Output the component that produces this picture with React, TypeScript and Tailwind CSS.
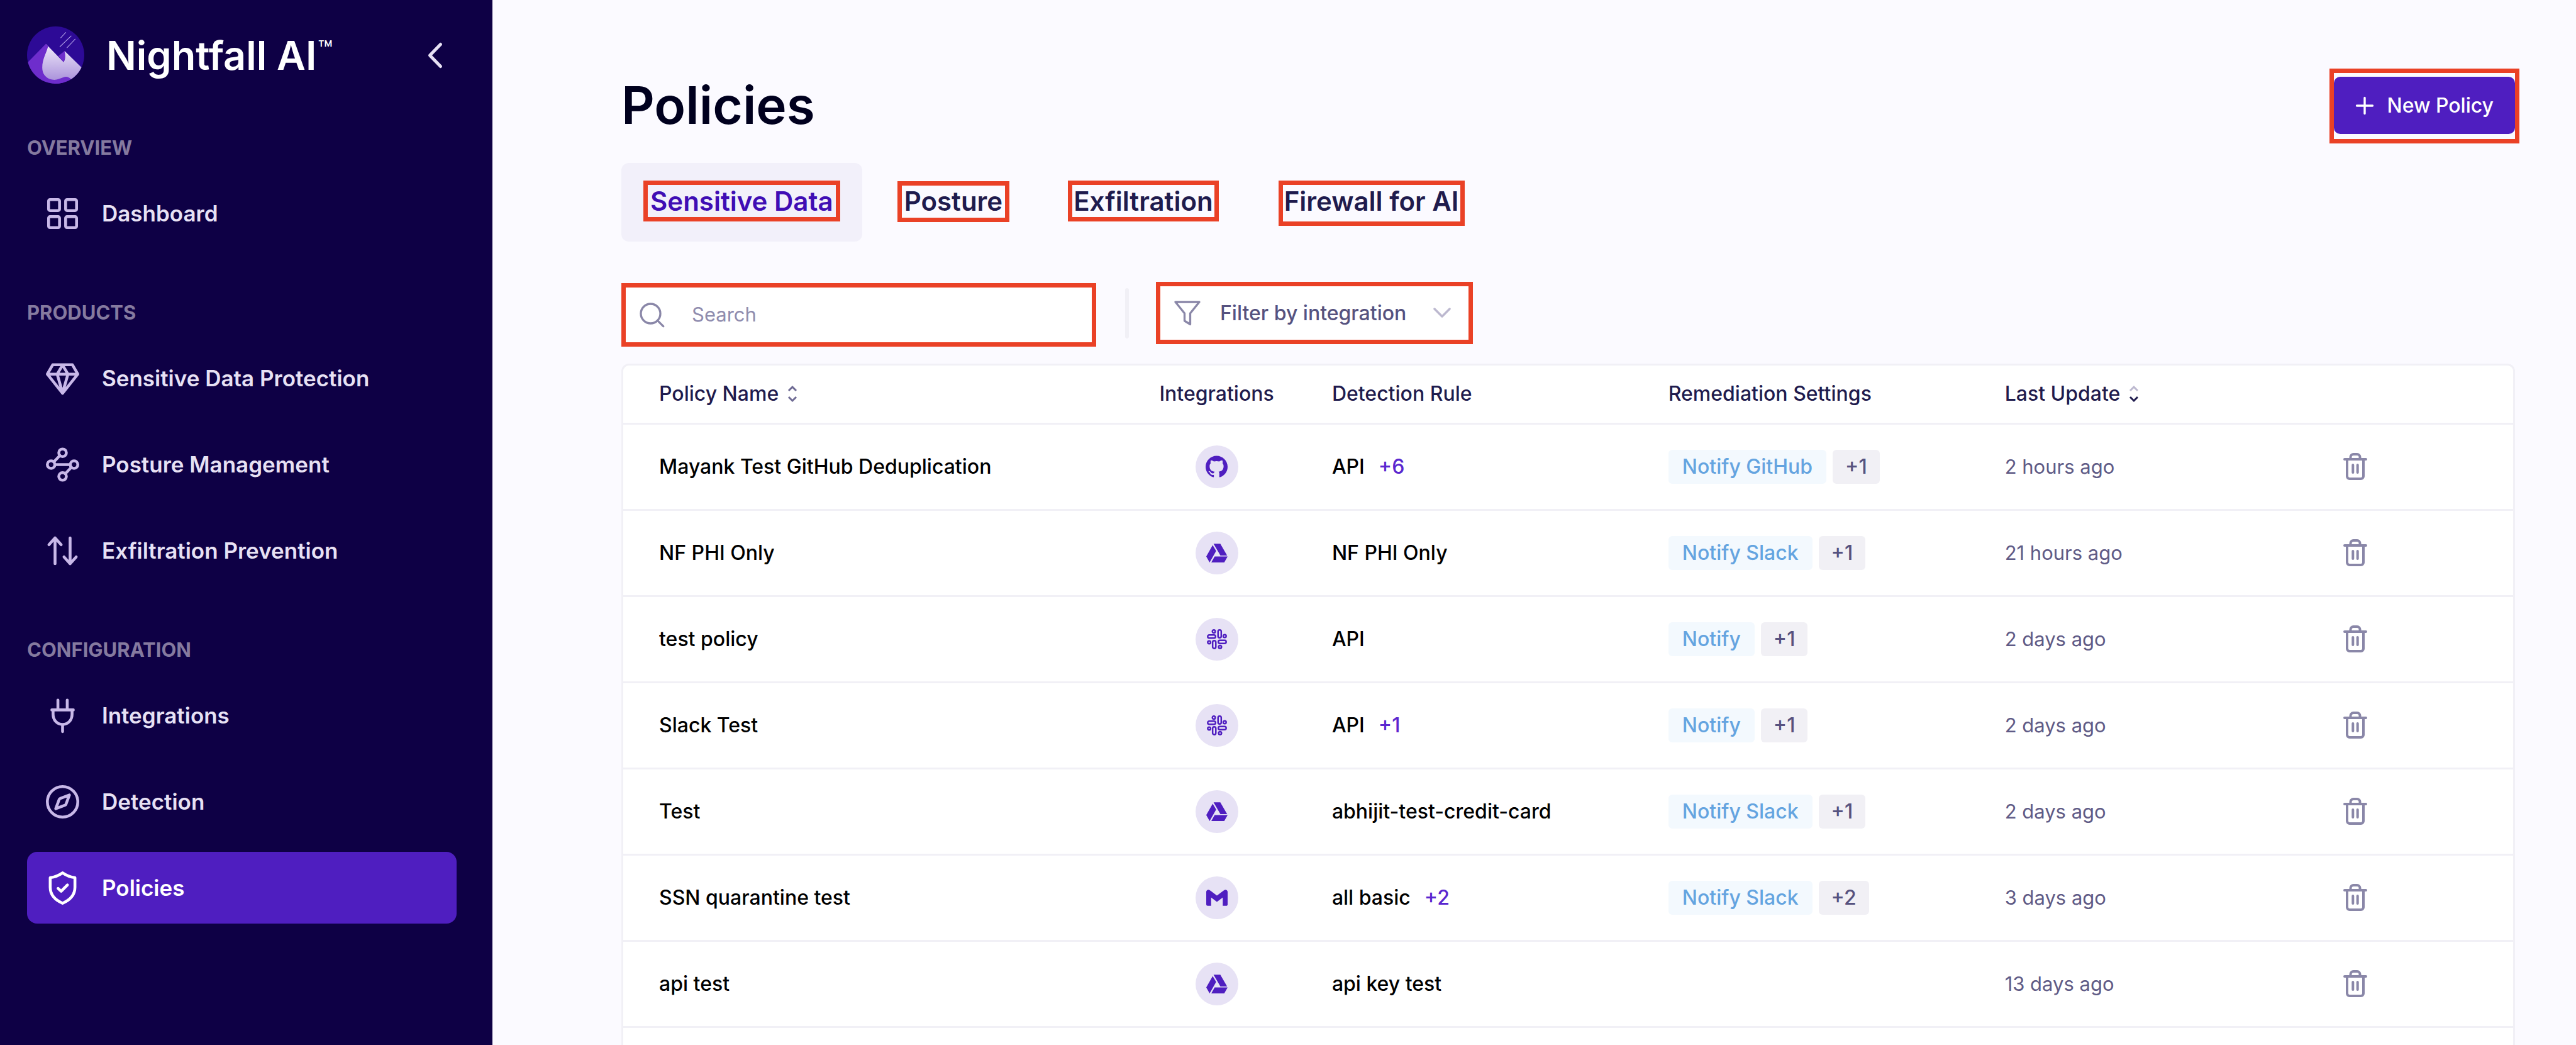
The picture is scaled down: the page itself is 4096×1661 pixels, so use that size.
import type { ReactNode } from "react";
import { FaGoogleDrive } from "react-icons/fa";
import { SiGithub, SiGmail } from "react-icons/si";

type IntegrationName = "github" | "drive" | "slack" | "gmail";

type Policy = {
  name: string;
  integration: IntegrationName;
  rule: string;
  moreRules?: string;
  action?: string;
  moreActions?: string;
  updated: string;
};

const policies: Policy[] = [
  { name: "Mayank Test GitHub Deduplication", integration: "github", rule: "API", moreRules: "+6", action: "Notify GitHub", moreActions: "+1", updated: "2 hours ago" },
  { name: "NF PHI Only", integration: "drive", rule: "NF PHI Only", action: "Notify Slack", moreActions: "+1", updated: "21 hours ago" },
  { name: "test policy", integration: "slack", rule: "API", action: "Notify", moreActions: "+1", updated: "2 days ago" },
  { name: "Slack Test", integration: "slack", rule: "API", moreRules: "+1", action: "Notify", moreActions: "+1", updated: "2 days ago" },
  { name: "Test", integration: "drive", rule: "abhijit-test-credit-card", action: "Notify Slack", moreActions: "+1", updated: "2 days ago" },
  { name: "SSN quarantine test", integration: "gmail", rule: "all basic", moreRules: "+2", action: "Notify Slack", moreActions: "+2", updated: "3 days ago" },
  { name: "api test", integration: "drive", rule: "api key test", updated: "13 days ago" },
];

function NavIcon({ children }: { children: ReactNode }) {
  return (
    <svg viewBox="0 0 20 20" className="size-[57px] shrink-0" fill="none" stroke="currentColor" strokeWidth="1.6" strokeLinecap="round" strokeLinejoin="round" aria-hidden="true">
      {children}
    </svg>
  );
}

const DashboardIcon = () => (
  <NavIcon>
    <rect x="2.2" y="2.2" width="6.1" height="6.1" rx="0.8" />
    <rect x="11.7" y="2.2" width="6.1" height="6.1" rx="0.8" />
    <rect x="2.2" y="11.7" width="6.1" height="6.1" rx="0.8" />
    <rect x="11.7" y="11.7" width="6.1" height="6.1" rx="0.8" />
  </NavIcon>
);

const DiamondIcon = () => (
  <NavIcon>
    <path d="M4.5 2.4h11l3 5.2L10 18.3 1.5 7.6l3-5.2ZM1.5 7.6h17M10 2.6 7 7.6l3 10.5 3-10.5-3-5" />
  </NavIcon>
);

const PostureIcon = () => (
  <NavIcon>
    <circle cx="10" cy="3.4" r="2.1" />
    <circle cx="3.6" cy="10" r="2.1" />
    <circle cx="16.4" cy="10" r="2.1" />
    <circle cx="10" cy="16.6" r="2.1" />
    <path d="M5.1 8.5 8.5 4.9M5.7 10h8.6M14.9 11.5l-3.4 3.6" />
  </NavIcon>
);

const ArrowsIcon = () => (
  <NavIcon>
    <path d="M5.8 17.2V2.8M2.4 6.6l3.4-3.8 3.4 3.8M14.2 2.8v14.4M10.8 13.4l3.4 3.8 3.4-3.8" />
  </NavIcon>
);

const PlugIcon = () => (
  <NavIcon>
    <path d="M7.4 1.3v4.8M12.6 1.3v4.8M4 6.8h12M4.7 7v2.2c0 3.2 2.2 5.7 5.3 5.7s5.3-2.5 5.3-5.7V7M10 15v3.9" />
  </NavIcon>
);

const CompassIcon = () => (
  <NavIcon>
    <circle cx="10" cy="10" r="8.5" />
    <path d="M13.8 6.2 11.9 11.3a1 1 0 0 1-.6.6L6.2 13.8 8.1 8.7a1 1 0 0 1 .6-.6l5.1-1.9Z" />
  </NavIcon>
);

const ShieldIcon = () => (
  <NavIcon>
    <path d="M10 1.5c2 1.4 4.3 2.4 6.9 2.7v5.4c0 3.8-2.5 7-6.9 8.9-4.4-1.9-6.9-5.1-6.9-8.9V4.2c2.6-.3 4.9-1.3 6.9-2.7Z" />
    <path d="m7.5 10.2 1.7 1.6 3.5-3.5" />
  </NavIcon>
);

const navSections = [
  { title: "OVERVIEW", items: [{ label: "Dashboard", Icon: DashboardIcon }] },
  {
    title: "PRODUCTS",
    items: [
      { label: "Sensitive Data Protection", Icon: DiamondIcon },
      { label: "Posture Management", Icon: PostureIcon },
      { label: "Exfiltration Prevention", Icon: ArrowsIcon },
    ],
  },
  {
    title: "CONFIGURATION",
    items: [
      { label: "Integrations", Icon: PlugIcon },
      { label: "Detection", Icon: CompassIcon },
      { label: "Policies", Icon: ShieldIcon, active: true },
    ],
  },
];

const tabs = [
  { label: "Sensitive Data", active: true, frame: "-inset-y-[7px] -inset-x-[11px]" },
  { label: "Posture", frame: "-top-[6px] -bottom-2 -inset-x-[11px]" },
  { label: "Exfiltration", frame: "-inset-y-[7px] -inset-x-[9px]" },
  { label: "Firewall for AI", frame: "-top-[7px] -bottom-[14px] -inset-x-[9px]" },
];

function Logo() {
  return (
    <svg viewBox="0 0 128 128" className="size-[91px]" aria-hidden="true">
      <defs>
        <linearGradient id="snow" x1="0" y1="39" x2="0" y2="120" gradientUnits="userSpaceOnUse">
          <stop offset="0" stopColor="#f1ecfb" />
          <stop offset="1" stopColor="#ab93db" />
        </linearGradient>
        <clipPath id="disc">
          <circle cx="64" cy="64" r="64" />
        </clipPath>
      </defs>
      <g clipPath="url(#disc)">
        <rect width="128" height="128" fill="#2d0a96" />
        <path d="M0 82 42 39l40 41v48H0Z" fill="#6e2dcc" />
        <path d="M70 66 84 55l4 8-6 17Z" fill="#6e2dcc" />
        <path d="M60 100h68v28H60Z" fill="#6e2dcc" />
        <path d="m42 39 40 41c3-5 5-12 2-25l40 39v14l-25 11c-5-6-11-8-18-5-8 3-16 7-25 5-14-3-22-13-22-27 0-18 9-33 12-44 2-4 0-6-4-9Z" fill="url(#snow)" />
        <g stroke="#b7a6ea" strokeWidth="1.5">
          <path d="M87 13 75 26M99 21 73 46M108 28 89 48" />
        </g>
      </g>
    </svg>
  );
}

function Sidebar() {
  return (
    <aside className="flex w-[783px] shrink-0 flex-col bg-[#0e0045] pt-[42px] pr-[57px] pl-[43px]">
      <div className="flex h-[91px] items-center">
        <Logo />
        <div className="ml-[35px] flex items-start text-white">
          <span className="text-[63px] leading-[74px] font-semibold">Nightfall AI</span>
          <span className="ml-0.5 text-[39px] leading-[56px]">™</span>
        </div>
        <button type="button" aria-label="Collapse sidebar" className="mr-[21px] ml-auto text-[#e7e1f4]">
          <svg viewBox="0 0 26 44" className="h-[44px] w-[26px]" fill="none" stroke="currentColor" strokeWidth="5" strokeLinecap="round" strokeLinejoin="round">
            <path d="M21.5 4.5 4.5 22l17 17.5" />
          </svg>
        </button>
      </div>
      <nav className="mt-[82px] flex flex-col gap-[81px]">
        {navSections.map((section) => (
          <section key={section.title}>
            <h2 className="text-[31px] leading-10 font-bold text-[#857a9f]">{section.title}</h2>
            <ul className="mt-[27px] flex flex-col gap-[23px]">
              {section.items.map(({ label, Icon, ...item }) => {
                const active = "active" in item;
                return (
                  <li key={label}>
                    <a
                      href="#"
                      aria-current={active ? "page" : undefined}
                      className={`flex h-[114px] items-center gap-[34px] rounded-2xl pl-7 text-[35px] font-semibold ${active ? "bg-[#4f1ec0] text-white" : "text-[#e7e1f4]"}`}
                    >
                      <span className={active ? "text-white" : "text-[#c8b8e8]"}>
                        <Icon />
                      </span>
                      {label}
                    </a>
                  </li>
                );
              })}
            </ul>
          </section>
        ))}
      </nav>
    </aside>
  );
}

function SlackIcon() {
  return (
    <svg viewBox="0 0 22 22" className="size-[32px]" fill="none" stroke="currentColor" strokeWidth="1.7" strokeLinejoin="round" aria-hidden="true">
      <rect x="12.2" y="0.9" width="3.5" height="8.6" rx="1.75" />
      <rect x="0.9" y="6.3" width="8.6" height="3.5" rx="1.75" />
      <rect x="12.5" y="12.2" width="8.6" height="3.5" rx="1.75" />
      <rect x="6.3" y="12.5" width="3.5" height="8.6" rx="1.75" />
      <circle cx="7.6" cy="2.5" r="1.6" />
      <circle cx="19.5" cy="7.6" r="1.6" />
      <circle cx="14.4" cy="19.5" r="1.6" />
      <circle cx="2.5" cy="14.4" r="1.6" />
    </svg>
  );
}

function IntegrationBadge({ name }: { name: IntegrationName }) {
  return (
    <span role="img" aria-label={name} className="mx-auto flex size-[68px] items-center justify-center rounded-full bg-[#e7e2f5] text-[#4f1ec0]">
      {name === "github" && <SiGithub className="size-[35px]" />}
      {name === "drive" && <FaGoogleDrive className="size-[34px]" />}
      {name === "slack" && <SlackIcon />}
      {name === "gmail" && <SiGmail className="size-[34px]" />}
    </span>
  );
}

function SortIcon({ up, down }: { up: string; down: string }) {
  return (
    <svg viewBox="0 0 16 28" className="h-7 w-4" fill="none" strokeWidth="3" aria-hidden="true">
      <path d="m2 9 6-6 6 6" className={up} />
      <path d="m2 19 6 6 6-6" className={down} />
    </svg>
  );
}

function TrashIcon() {
  return (
    <svg viewBox="0 0 38 43" className="h-[43px] w-[38px]" fill="none" stroke="currentColor" strokeWidth="4" strokeLinecap="round" strokeLinejoin="round" aria-hidden="true">
      <path d="M2 10h34M6 10v27a4 4 0 0 0 4 4h18a4 4 0 0 0 4-4V10M11.500 9.500v-3A4.500 4.500 0 0 1 16 2h6a4.500 4.500 0 0 1 4.500 4.500v3M15.300 19v12M22.700 19v12" />
    </svg>
  );
}

function PolicyTable() {
  return (
    <div className="mt-[27px] min-h-0 flex-1 overflow-hidden rounded-t-xl border-3 border-b-0 border-[#f1f0f6] bg-white">
      <table className="w-full table-fixed text-left text-[32px] leading-10 font-medium text-black">
        <thead>
          <tr className="h-[92px] border-b-3 border-[#f1f0f6] text-[#1f1b4d]">
            <th className="w-[25.3%] pl-[57px] font-medium">
              <button type="button" className="flex items-center gap-3.5">
                Policy Name <SortIcon up="stroke-[#6f6b94]" down="stroke-[#6f6b94]" />
              </button>
            </th>
            <th className="w-[12.2%] text-center font-medium">Integrations</th>
            <th className="w-[17.8%] font-medium">Detection Rule</th>
            <th className="w-[17.8%] font-medium">Remediation Settings</th>
            <th className="w-[10.2%] font-medium">
              <button type="button" className="flex items-center gap-3.5 whitespace-nowrap">
                Last Update <SortIcon up="stroke-[#bcb8cf]" down="stroke-[#1f1b4d]" />
              </button>
            </th>
            <th className="w-[16.7%]" aria-label="Actions" />
          </tr>
        </thead>
        <tbody>
          {policies.map((policy) => (
            <tr key={policy.name} className="h-[137px] border-b-3 border-[#f1f0f6]">
              <td className="pl-[57px]">{policy.name}</td>
              <td>
                <IntegrationBadge name={policy.integration} />
              </td>
              <td>
                {policy.rule}
                {policy.moreRules && <span className="ml-[22px] text-[#5a27cf]">{policy.moreRules}</span>}
              </td>
              <td>
                {policy.action && (
                  <div className="flex gap-2.5 leading-[54px]">
                    <span className="rounded-md bg-[#f3f9fe] px-[22px] text-[#64a4e0]">{policy.action}</span>
                    <span className="rounded-md bg-[#f1f0f5] px-5 text-[#56527f]">{policy.moreActions}</span>
                  </div>
                )}
              </td>
              <td className="text-[31px] font-normal text-[#5f5b86]">{policy.updated}</td>
              <td>
                <button type="button" aria-label={`Delete ${policy.name}`} className="mx-auto block text-[#8a87a8]">
                  <TrashIcon />
                </button>
              </td>
            </tr>
          ))}
        </tbody>
      </table>
    </div>
  );
}

export default function App() {
  return (
    <div className="flex h-screen overflow-hidden bg-[#fbfaff] font-['Inter','Noto_Sans',sans-serif]">
      <Sidebar />
      <main className="flex min-w-0 flex-1 flex-col pt-[122px] pr-[97px] pl-[205px]">
        <header className="flex items-center justify-between">
          <h1 className="text-[82px] leading-[91px] font-semibold text-[#00001e]">Policies</h1>
          <div className="relative">
            <button type="button" className="flex h-[91px] items-center rounded-[10px] bg-[#4f1ec0] px-[34px] text-[32px] font-medium text-white">
              <svg viewBox="0 0 30 30" className="mr-5 size-[30px]" fill="none" stroke="currentColor" strokeWidth="3.4" strokeLinecap="round" aria-hidden="true">
                <path d="M15 2.5v25M2.5 15h25" />
              </svg>
              New Policy
            </button>
            <span className="pointer-events-none absolute -inset-x-[7px] -top-[13px] -bottom-[15px] border-7 border-[#ea4126]" />
          </div>
        </header>

        <div role="tablist" className="mt-[46px] flex gap-[21px]">
          {tabs.map((tab) => (
            <button
              key={tab.label}
              type="button"
              role="tab"
              aria-selected={!!tab.active}
              className={`flex h-[125px] items-center rounded-xl px-[46px] pb-1 text-[42px] leading-[51px] font-semibold ${tab.active ? "bg-[#f2f0fa] text-[#3f0db4]" : "text-[#1f1b4d]"}`}
            >
              <span className="relative">
                {tab.label}
                <span className={`pointer-events-none absolute border-7 border-[#ea4126] ${tab.frame}`} />
              </span>
            </button>
          ))}
        </div>

        <div className="mt-16 flex items-start">
          <label className="mt-0.5 flex h-[101px] w-[755px] items-center border-7 border-[#ea4126] bg-white pl-[22px] text-[#8a87a8]">
            <svg viewBox="0 0 40 40" className="size-10" fill="none" stroke="currentColor" strokeWidth="3.3" strokeLinecap="round" aria-hidden="true">
              <circle cx="17.5" cy="17.5" r="15.5" />
              <path d="m28.7 28.7 9 9" />
            </svg>
            <input type="search" aria-label="Search" placeholder="Search" className="ml-[43px] min-w-0 flex-1 text-[31px] outline-none placeholder:text-[#8f8cae]" />
          </label>
          <div className="mt-2.5 ml-[46px] h-20 w-1.5 rounded-full bg-[#f1f0f6]" />
          <label className="ml-[43px] flex h-[99px] w-[504px] items-center border-7 border-[#ea4126] bg-white pr-[28px] pl-[22px] text-[#8a87a8]">
            <svg viewBox="0 0 42 40" className="h-10 w-[42px] shrink-0" fill="none" stroke="currentColor" strokeWidth="3.3" strokeLinejoin="round" aria-hidden="true">
              <path d="M2 2h38L25.5 20v17.5L16.5 32V20L2 2Z" />
            </svg>
            <select aria-label="Filter by integration" className="ml-[31px] min-w-0 flex-1 appearance-none text-[32px] font-medium text-[#56527f] outline-none">
              <option>Filter by integration</option>
            </select>
            <svg viewBox="0 0 28 17" className="h-[17px] w-7 shrink-0 text-[#bcb8cf]" fill="none" stroke="currentColor" strokeWidth="3.5" strokeLinecap="round" strokeLinejoin="round" aria-hidden="true">
              <path d="m2 2 12 12L26 2" />
            </svg>
          </label>
        </div>

        <PolicyTable />
      </main>
    </div>
  );
}
